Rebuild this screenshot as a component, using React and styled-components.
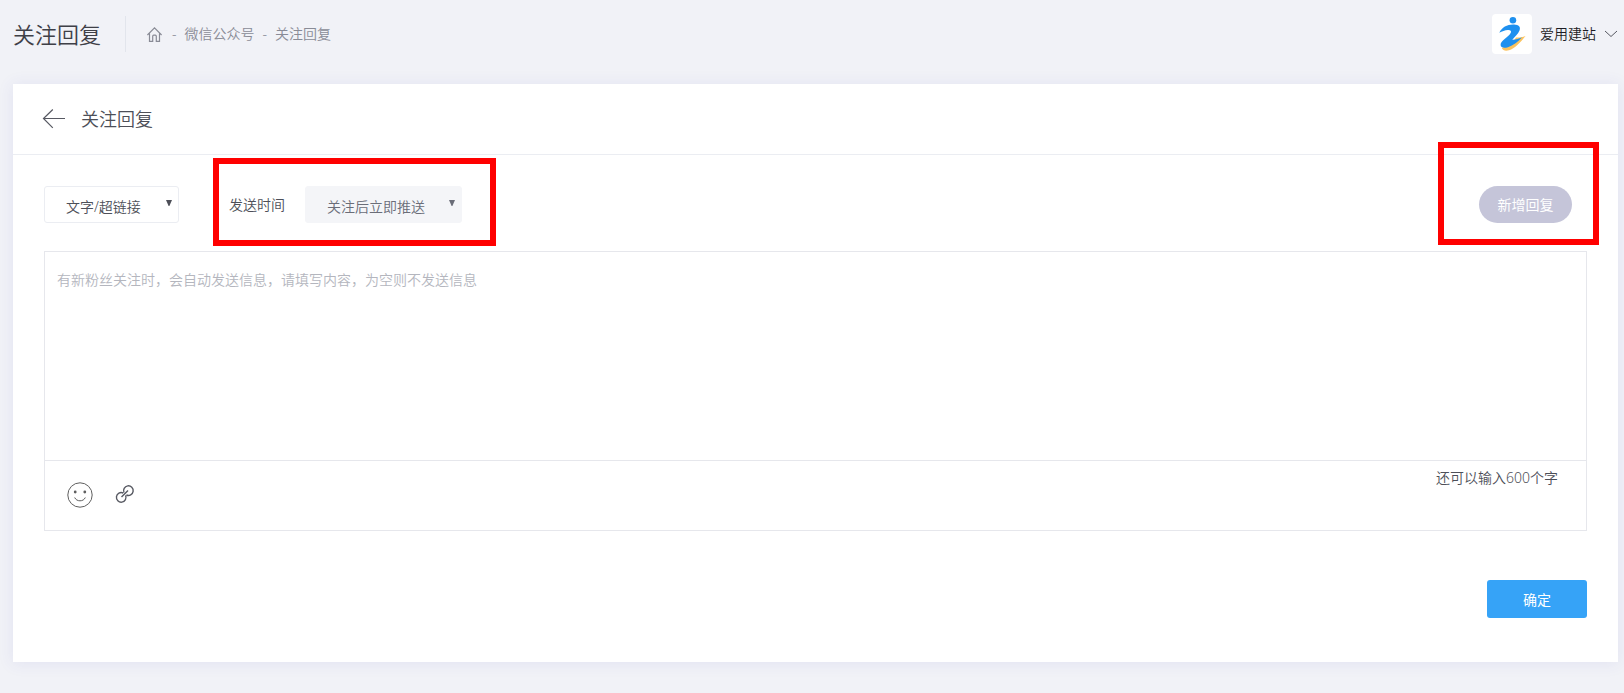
import { useState } from "react";
import styled, { createGlobalStyle, css } from "styled-components";

const GlobalStyle = createGlobalStyle`
    * {
        box-sizing: border-box;
    }

    body {
        margin: 0;
        background: #f1f2f7;
        color: #4d4f58;
        font-family: "Noto Sans", "Noto Sans CJK SC", sans-serif;
        font-size: 14px;
        font-weight: 350;
        line-height: 20px;
    }

    button,
    select,
    textarea {
        font: inherit;
        color: inherit;
    }
`;

const Page = styled.div`
    padding: 0 6px 31px 13px;
`;

const Header = styled.header`
    display: flex;
    align-items: center;
    height: 68px;
    margin-bottom: 16px;
`;

const PageTitle = styled.h1`
    margin: 0;
    padding-right: 24px;
    border-right: 1px solid #e2e5ec;
    color: #3f4047;
    font-size: 22px;
    font-weight: 350;
    line-height: 36px;
`;

const Breadcrumb = styled.nav`
    display: flex;
    align-items: center;
    gap: 8px;
    padding-left: 21px;
    color: #898b96;

    a {
        display: flex;
        color: inherit;
        text-decoration: none;
    }
`;

const HomeLink = styled.a`
    padding-right: 2px;
`;

const Account = styled.button`
    display: flex;
    align-items: center;
    gap: 8px;
    margin-left: auto;
    padding: 0;
    border: 0;
    background: none;
    color: #1c1c24;
    cursor: pointer;
`;

const Avatar = styled.span`
    display: flex;
    width: 40px;
    height: 40px;
    border-radius: 4px;
    background: #ffffff;
`;

const Card = styled.main`
    background: #ffffff;
    box-shadow: 0 1px 15px 1px rgba(69, 65, 178, 0.08);
`;

const CardHeader = styled.div`
    display: flex;
    align-items: center;
    gap: 15px;
    height: 71px;
    padding: 0 29px;
    border-bottom: 1px solid #ebedf2;
`;

const BackLink = styled.a`
    display: flex;
    color: #575962;
`;

const CardTitle = styled.h2`
    margin: 0;
    font-size: 18px;
    font-weight: 350;
    line-height: 28px;
`;

const Form = styled.form`
    padding: 31px 31px 44px;
`;

const Toolbar = styled.div`
    display: flex;
    align-items: center;
    gap: 50px;
    margin-bottom: 28px;
`;

const highlight = css`
    position: relative;

    &::after {
        content: "";
        position: absolute;
        border: 6px solid #ff0000;
        pointer-events: none;
    }
`;

const TimeField = styled.div`
    ${highlight}
    display: flex;
    align-items: center;
    gap: 20px;

    &::after {
        inset: -28px -34px -23px -16px;
    }
`;

const AddField = styled.div`
    ${highlight}
    margin-left: auto;
    margin-right: 15px;

    &::after {
        inset: -44px -27px -22px -41px;
    }
`;

const SelectWrap = styled.div`
    position: relative;
    width: ${(props) => props.$width}px;
    color: ${(props) => (props.$muted ? "#6a6d78" : "#4d4f58")};

    svg {
        position: absolute;
        top: 14px;
        right: 7px;
        pointer-events: none;
    }
`;

const Select = styled.select`
    display: block;
    width: 100%;
    height: 37px;
    padding: 5px 20px 0 21px;
    border: 1px solid ${(props) => (props.$muted ? "#f4f5f8" : "#ebedf2")};
    border-radius: 3px;
    background: ${(props) => (props.$muted ? "#f4f5f8" : "#ffffff")};
    appearance: none;
    outline: none;
`;

const AddButton = styled.button`
    display: block;
    width: 93px;
    height: 37px;
    padding: 0;
    border: 0;
    border-radius: 19px;
    background: #c5c5d9;
    color: #ffffff;
    font-weight: 400;
`;

const Editor = styled.div`
    border: 1px solid #e6e7ec;
`;

const MessageInput = styled.textarea`
    display: block;
    width: 100%;
    height: 208px;
    padding: 18px 12px;
    border: 0;
    outline: none;
    resize: none;
    background: transparent;

    &::placeholder {
        color: #b4b6be;
        opacity: 1;
    }
`;

const EditorFooter = styled.div`
    display: flex;
    align-items: flex-start;
    justify-content: space-between;
    height: 70px;
    padding: 7px 28px 0 22px;
    border-top: 1px solid #e6e7ec;
`;

const Tools = styled.div`
    display: flex;
    align-items: center;
    gap: 22px;
    padding-top: 14px;
`;

const ToolButton = styled.button`
    display: flex;
    padding: 0;
    border: 0;
    background: none;
    cursor: pointer;
`;

const Actions = styled.div`
    display: flex;
    justify-content: flex-end;
    margin-top: 49px;
`;

const SubmitButton = styled.button`
    width: 100px;
    height: 38px;
    padding: 2px 0 0;
    border: 0;
    border-radius: 3px;
    background: #36a3f7;
    color: #ffffff;
    font-weight: 400;
    cursor: pointer;
`;

const HomeIcon = () => (
    <svg width="15" height="15" viewBox="0 0 15 15" fill="none" stroke="currentColor" strokeWidth="1.2">
        <path d="M0.4 8 7.5 0.9 14.6 8M2.5 6.5v7.9h3.2V9.2q0-1 1-1h1.6q1 0 1 1v5.2h3.2V6.5" />
    </svg>
);

const BackIcon = () => (
    <svg width="24" height="20" viewBox="0 0 24 20" fill="none" stroke="currentColor" strokeWidth="1.2">
        <path d="M1.5 9.5H23M10.8 0.5 1.5 9.5l9.3 9.3" />
    </svg>
);

const Logo = () => (
    <svg width="40" height="40" viewBox="0 0 40 40">
        <path
            d="M9.8 34C11 36.600 13.500 37.300 17 36.300c3-.9 5.500-2.600 7.800-4.700 3.300-3 6-6.100 8.700-9.600-3 1.300-6.500 1.600-9.500 1.500l-4 6z"
            fill="#fbc35f"
        />
        <path
            d="M7.3 18.700C10 13 15.500 10.200 22 10.500c4.800.2 7 2.200 5.500 6-1.300 3.500-4.700 6-7.200 9.200 3.500.1 6.200-.7 9.700-2.400-3.800 4.300-8.800 8.300-14 9.900-4 1.300-7.200.7-7.400-2.100-.2-4.500 8.300-8 10.300-12.500.6-1.800-.5-2.800-3-2.600-3 .2-5.900 1.300-8.600 2.700z"
            fill="#1e90ef"
        />
        <circle cx="20.900" cy="6.200" r="3.300" fill="#1e90ef" />
    </svg>
);

const ChevronIcon = () => (
    <svg width="14" height="8" viewBox="0 0 14 8" fill="none" stroke="#575962">
        <path d="M1 1l6 5.500L13 1" />
    </svg>
);

const CaretIcon = () => (
    <svg width="6" height="6" viewBox="0 0 6 6" fill="currentColor">
        <path d="M0 0h6L3.4 6h-.8z" />
    </svg>
);

const SmileIcon = () => (
    <svg width="26" height="26" viewBox="0 0 26 26" fill="none" stroke="#5f5f5f">
        <circle cx="13" cy="13" r="12.2" />
        <path d="M7.7 15.500c1 2.300 3 3.300 5.300 3.300s4.300-1 5.300-3.300" />
        <circle cx="8.200" cy="10" r="1.400" fill="#5f5f5f" stroke="none" />
        <circle cx="17.800" cy="10" r="1.400" fill="#5f5f5f" stroke="none" />
    </svg>
);

const LinkIcon = () => (
    <svg width="20" height="22" viewBox="0 0 20 22" fill="none" stroke="#575962" strokeWidth="1.4">
        <path d="M9 8.600A4.800 4.800 0 1 1 11.400 11" />
        <path d="M10.600 11.400A4.800 4.800 0 1 1 8.200 9" />
        <path d="M6.500 13 13 6.500" />
    </svg>
);

const MAX_LENGTH = 600;

export default function App() {
    const [message, setMessage] = useState("");

    return (
        <>
            <GlobalStyle />
            <Page>
                <Header>
                    <PageTitle>关注回复</PageTitle>
                    <Breadcrumb>
                        <HomeLink href="#home" aria-label="首页">
                            <HomeIcon />
                        </HomeLink>
                        <span>-</span>
                        <a href="#wechat">微信公众号</a>
                        <span>-</span>
                        <a href="#reply">关注回复</a>
                    </Breadcrumb>
                    <Account type="button">
                        <Avatar>
                            <Logo />
                        </Avatar>
                        爱用建站
                        <ChevronIcon />
                    </Account>
                </Header>

                <Card>
                    <CardHeader>
                        <BackLink href="#back" aria-label="返回">
                            <BackIcon />
                        </BackLink>
                        <CardTitle>关注回复</CardTitle>
                    </CardHeader>

                    <Form onSubmit={(e) => e.preventDefault()}>
                        <Toolbar>
                            <SelectWrap $width={135}>
                                <Select aria-label="回复类型">
                                    <option>文字/超链接</option>
                                </Select>
                                <CaretIcon />
                            </SelectWrap>
                            <TimeField>
                                <label htmlFor="send-time">发送时间</label>
                                <SelectWrap $width={157} $muted>
                                    <Select id="send-time" $muted>
                                        <option>关注后立即推送</option>
                                    </Select>
                                    <CaretIcon />
                                </SelectWrap>
                            </TimeField>
                            <AddField>
                                <AddButton type="button">新增回复</AddButton>
                            </AddField>
                        </Toolbar>

                        <Editor>
                            <MessageInput
                                aria-label="回复内容"
                                placeholder="有新粉丝关注时，会自动发送信息，请填写内容，为空则不发送信息"
                                maxLength={MAX_LENGTH}
                                value={message}
                                onChange={(e) => setMessage(e.target.value)}
                            />
                            <EditorFooter>
                                <Tools>
                                    <ToolButton type="button" aria-label="表情">
                                        <SmileIcon />
                                    </ToolButton>
                                    <ToolButton type="button" aria-label="超链接">
                                        <LinkIcon />
                                    </ToolButton>
                                </Tools>
                                <span>还可以输入{MAX_LENGTH - message.length}个字</span>
                            </EditorFooter>
                        </Editor>

                        <Actions>
                            <SubmitButton type="submit">确定</SubmitButton>
                        </Actions>
                    </Form>
                </Card>
            </Page>
        </>
    );
}
